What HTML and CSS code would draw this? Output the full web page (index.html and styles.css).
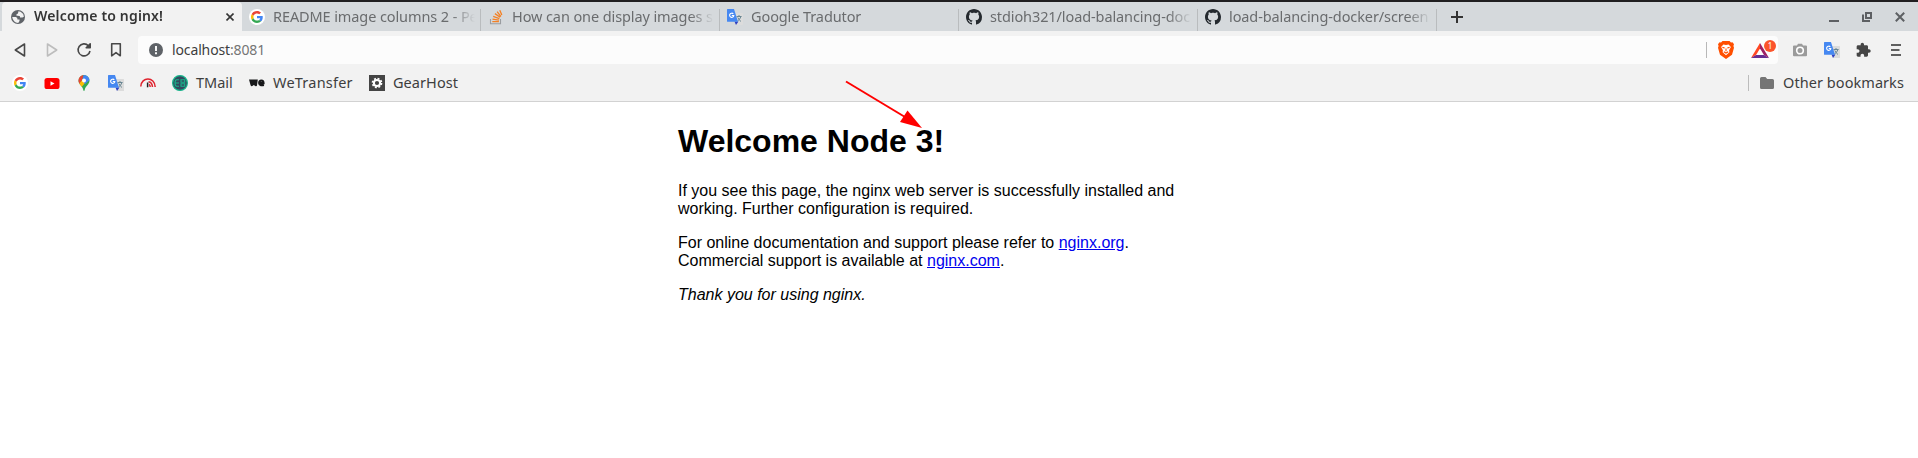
FILE: index.html
```html
<!DOCTYPE html>
<html lang="en">
<head>
<meta charset="utf-8">
<title>Welcome to nginx!</title>
<link rel="stylesheet" href="styles.css">
</head>
<body>
<svg class="defs" aria-hidden="true">
  <symbol id="google" viewBox="0 0 48 48">
    <path fill="#ea4335" d="M24 9.5c3.54 0 6.71 1.22 9.21 3.6l6.85-6.85C35.9 2.38 30.47 0 24 0 14.62 0 6.51 5.38 2.56 13.22l7.98 6.19C12.43 13.72 17.74 9.5 24 9.5z"/>
    <path fill="#4285f4" d="M46.98 24.55c0-1.57-.15-3.09-.38-4.55H24v9.02h12.94c-.58 2.96-2.26 5.48-4.78 7.18l7.73 6c4.51-4.18 7.09-10.36 7.09-17.65z"/>
    <path fill="#fbbc05" d="M10.53 28.59c-.48-1.45-.76-2.99-.76-4.59s.27-3.14.76-4.59l-7.98-6.19C.92 16.46 0 20.12 0 24c0 3.88.92 7.54 2.56 10.78l7.97-6.19z"/>
    <path fill="#34a853" d="M24 48c6.48 0 11.93-2.13 15.89-5.81l-7.73-6c-2.15 1.45-4.92 2.3-8.16 2.3-6.26 0-11.57-4.22-13.47-9.91l-7.98 6.19C6.51 42.62 14.62 48 24 48z"/>
  </symbol>
  <symbol id="translate" viewBox="0 0 16 16">
    <path fill="#dcdcdc" d="M7 4h8.5q.5 0 .5.5v11q0 .5-.5.5H9z"/>
    <path fill="none" stroke="#5f7f8c" stroke-width=".9" d="M9.5 7.5h5M12 6v1.500M14 7.500q-1 3-3.500 4.500M10.800 8.500q1.200 2.500 3.200 4"/>
    <path fill="#3040c0" d="M7.500 12.500h4L9 16z"/>
    <path fill="#4688f1" d="M.5 0H7l4 12.700H.5Q0 12.700 0 12.200V.5Q0 0 .5 0z"/>
    <path fill="none" stroke="#fff" stroke-width="1.100" d="M6.300 4.900A2.100 2.100 0 1 0 6.800 6.500H4.800"/>
  </symbol>
  <symbol id="github" viewBox="0 0 16 16">
    <path fill="#24292e" d="M8 0C3.58 0 0 3.58 0 8c0 3.54 2.290 6.530 5.470 7.590.4.070.550-.170.550-.380 0-.190-.010-.820-.010-1.490-2.010.370-2.530-.490-2.690-.940-.090-.230-.480-.940-.820-1.130-.280-.150-.680-.520-.010-.530.630-.010 1.080.580 1.230.820.720 1.210 1.870.870 2.330.660.070-.520.280-.870.510-1.070-1.780-.2-3.640-.890-3.640-3.950 0-.870.310-1.590.820-2.150-.080-.2-.360-1.020.080-2.120 0 0 .670-.210 2.200.820.640-.180 1.320-.270 2-.270s1.360.090 2 .270c1.530-1.040 2.200-.820 2.200-.820.440 1.100.160 1.920.080 2.120.510.560.820 1.270.820 2.150 0 3.070-1.870 3.750-3.650 3.950.290.250.540.730.540 1.480 0 1.070-.010 1.930-.010 2.200 0 .210.150.460.550.380A8.010 8.010 0 0 0 16 8c0-4.420-3.580-8-8-8z"/>
  </symbol>
</svg>

<header class="chrome">
  <div class="tabstrip">
    <div class="tab active">
      <svg class="icon" viewBox="0 0 16 16"><circle cx="8" cy="8" r="7" fill="#5f6368"/><path fill="#f2f2f2" d="M2.200 8.100h3.500q2 .2 1.800 2.300h2v1.500L8.200 14Q3 13.600 2.200 8.100zM8.400 2.300l2.200.4q3 1.500 3.300 5l-1.500.8H10V7.300L8 6.800H6.500V5.200L8 4.600z"/></svg>
      <span class="title">Welcome to nginx!</span>
      <svg class="close" viewBox="0 0 8 8"><path d="M.5.5l7 7M7.500.5l-7 7"/></svg>
    </div>
    <div class="tab first"><span class="disc"><svg class="g"><use href="#google"/></svg></span><span class="title">README image columns 2 - Pe</span></div>
    <div class="tab">
      <svg class="icon" viewBox="0 0 16 16"><path fill="none" stroke="#9a9da0" stroke-width="1.100" d="M2.500 10v4.800h10V10"/><path fill="none" stroke="#f48024" stroke-width="1.300" d="M4.300 12.600h6.600M4.500 10.200l6.500.9M5.200 7.400l6.200 2.200M6.900 4.600l5.300 3.600M9.100 2.700l3.800 4.800M11.800 1.300l2 4.800"/></svg>
      <span class="title">How can one display images si</span>
    </div>
    <div class="tab"><svg class="icon"><use href="#translate"/></svg><span class="title">Google Tradutor</span></div>
    <div class="tab"><svg class="icon"><use href="#github"/></svg><span class="title">stdioh321/load-balancing-doc</span></div>
    <div class="tab"><svg class="icon"><use href="#github"/></svg><span class="title">load-balancing-docker/screen</span></div>
    <div class="tab new"><svg class="plus" viewBox="0 0 12 12"><path d="M6 0v12M0 6h12"/></svg></div>
    <div class="window">
      <svg viewBox="0 0 10 10"><path d="M0 9h10"/></svg>
      <svg viewBox="0 0 10 10"><path d="M4 1h5v5H4zM1 2.500V9h7"/></svg>
      <svg viewBox="0 0 10 10"><path d="M.8.8l8.400 8.400M9.200.8L.8 9.200"/></svg>
    </div>
  </div>

  <div class="toolbar">
    <nav class="nav">
      <svg viewBox="0 0 16 16"><path d="M12.500 2v12L3.300 8z"/></svg>
      <svg class="dim" viewBox="0 0 16 16"><path d="M3.500 2v12l9.200-6z"/></svg>
      <svg viewBox="0 0 16 16"><path d="M12.400 3.700A6 6 0 1 0 14 9"/><path class="solid" d="M10.200 5.800l4-4v4z"/></svg>
      <svg viewBox="0 0 16 16"><path d="M3.700 1.800h8.600v12L8 10.600l-4.300 3.200z"/></svg>
    </nav>
    <div class="address">
      <svg class="info" viewBox="0 0 14 14"><circle cx="7" cy="7" r="7" fill="#5f6368"/><path d="M7 3v5M7 9.300v1.900" stroke="#fff" stroke-width="1.900"/></svg>
      <span class="url">localhost<i>:8081</i></span>
      <span class="bar"></span>
      <svg class="brave" viewBox="0 0 16 18"><path fill="#ff4f00" d="M4.500 0h7l1.500 1.500 1.500-.2 1.500 2-.6 1.700.6 1.700-2 7L8 18l-6-4.300-2-7L.6 5 0 3.300l1.500-2L3 1.500z"/><path fill="#fff" d="M8 4l2.600-.6L12.900 6l-1.800 3.300.3 1.900L8 14.300l-3.400-3.100.3-1.900L3.100 6l2.300-2.600z"/><path fill="none" stroke="#ff4f00" stroke-width="1.100" d="M4.400 6.400l2.300.6M11.600 6.400L9.300 7M8 7.500v2.800M5.800 10.700L8 12l2.200-1.300"/></svg>
      <div class="bat">
        <svg viewBox="0 0 18 15"><path fill="#ff4724" d="M9 0L0 15l5-3 4-6.500z"/><path fill="#9e1f63" d="M9 0l9 15-5-3-4-6.500z"/><path fill="#662d91" d="M0 15h18l-5-3H5z"/></svg>
        <b>1</b>
      </div>
    </div>
    <div class="extensions">
      <svg viewBox="0 0 16 16"><path fill="#9b9b9b" d="M2 3.500h3L6 1.700h4l1 1.800h3q1 0 1 1v8.700q0 1-1 1H2q-1 0-1-1V4.500q0-1 1-1z"/><circle cx="8" cy="8.500" r="3.300" fill="none" stroke="#fff" stroke-width="1.600"/></svg>
      <svg><use href="#translate"/></svg>
      <svg class="puzzle" viewBox="1 0 24 24"><path fill="#454545" d="M20.500 11H19V7c0-1.100-.9-2-2-2h-4V3.500C13 2.120 11.880 1 10.500 1S8 2.120 8 3.500V5H4c-1.100 0-1.990.9-1.990 2v3.800H3.500c1.490 0 2.700 1.210 2.700 2.700s-1.210 2.700-2.700 2.700H2V20c0 1.100.9 2 2 2h3.800v-1.500c0-1.490 1.210-2.700 2.700-2.700s2.700 1.210 2.700 2.700V22H17c1.100 0 2-.9 2-2v-4h1.500c1.380 0 2.500-1.120 2.500-2.500S21.880 11 20.500 11z"/></svg>
      <svg viewBox="0 0 16 16"><path stroke="#606060" stroke-width="1.800" d="M3 3h10M3 8h8.500M3 13h10"/></svg>
    </div>
  </div>

  <div class="bookmarks">
    <span class="disc"><svg class="g"><use href="#google"/></svg></span>
    <svg class="icon" viewBox="0 0 16 16"><rect x=".5" y="3" width="15" height="11" rx="2.600" fill="#f00"/><path fill="#fff" d="M6.500 6.200v4.600l4-2.300z"/></svg>
    <svg class="icon" viewBox="0 0 16 16"><clipPath id="pin"><path d="M8 0a5.500 5.500 0 0 1 5.500 5.600C13.500 9.600 9.500 11 8.700 15q-.2 1-.7 1t-.7-1C6.500 11 2.500 9.600 2.500 5.600A5.500 5.500 0 0 1 8 0z"/></clipPath><g clip-path="url(#pin)"><path fill="#34a853" d="M0 0h16v16H0z"/><path fill="#fbbc04" d="M1 11L6 5l3 3-5 6z"/><path fill="#4285f4" d="M8-1h8v4L9 9 6 5z"/><path fill="#ea4335" d="M1 3l2-4h4.500L6.300 4.500 3 9 1 7z"/></g><circle cx="8" cy="5.500" r="2" fill="#fff"/></svg>
    <svg class="icon"><use href="#translate"/></svg>
    <svg class="icon" viewBox="0 0 16 16"><path fill="none" stroke="#e0232e" stroke-width="1.500" d="M.8 11.500C1.200 1.500 14.800 1.500 15.200 12M8.500 6.800q3.600.4 4 5.200M9 9.500q1.200.5 1.200 2.500"/><path d="M7.600 12.300V7.500" fill="none" stroke="#222" stroke-width="1.500"/></svg>
    <div class="mark"><svg class="icon" viewBox="0 0 16 16"><circle cx="8" cy="8" r="7.400" fill="#34495e" stroke="#16b78c" stroke-width="1.200"/><path fill="none" stroke="#16b78c" stroke-width="1.100" d="M7 4.700H4.700Q3 4.700 3 8t1.700 3.300H7M3 8h4M9 4.700h3.700v2.600H9zM9 8.700h3.700v2.600H9z"/></svg><span class="w-tmail">TMail</span></div>
    <div class="mark"><svg class="icon" viewBox="0 0 16 16"><path fill="#17181a" d="M0 4.500h8.800L8 10.500q-.4 1.200-1.700.6L4.800 10l-1.500 1.100Q2 11.500 1.500 10z"/><path fill="none" stroke="#17181a" stroke-width="2.200" d="M10.500 8.200h4Q14.500 5.500 12.400 5.500 10.200 5.600 10.200 8q.4 3 4.700 1.900"/></svg><span class="w-transfer">WeTransfer</span></div>
    <div class="mark"><svg class="icon" viewBox="0 0 16 16"><path fill="#444" d="M0 0h16v16H0z"/><circle cx="8" cy="8" r="4.500" fill="none" stroke="#fff" stroke-width="1.700" stroke-dasharray="1.900 1.634"/><circle cx="8" cy="8" r="3.100" fill="none" stroke="#fff" stroke-width="2"/></svg><span class="w-gear">GearHost</span></div>
    <div class="other"><svg class="icon" viewBox="0 0 16 16"><path fill="#757575" d="M2.500 2h4l1.700 2h5.300q1.500 0 1.500 1.500v7q0 1.500-1.500 1.500h-11Q1 14 1 12.500v-9Q1 2 2.500 2z"/></svg><span class="w-other">Other bookmarks</span></div>
  </div>
</header>

<main class="page">
  <h1>Welcome Node 3!</h1>
  <p>If you see this page, the nginx web server is successfully installed and working. Further configuration is required.</p>
  <p>For online documentation and support please refer to <a href="#">nginx.org</a>.<br>Commercial support is available at <a href="#">nginx.com</a>.</p>
  <p><em>Thank you for using nginx.</em></p>
</main>

<svg class="arrow" viewBox="0 0 80 50"><path d="M2 2.500L61 38" stroke="#f00" stroke-width="2"/><path fill="#f00" d="M78 49L63.500 31.500 56 43z"/></svg>
</body>
</html>
```
FILE: styles.css
```css
body {
  margin: 0;
  background: #fff;
  color: #000;
  overflow: hidden;
}

svg {
  display: block;
  flex: none;
}

.defs {
  position: absolute;
  width: 0;
  height: 0;
}

.chrome {
  height: 101px;
  background: #f2f2f2;
  border-bottom: 1px solid #d2d2d2;
  font: 14.5px/20px "Noto Sans", "Open Sans", sans-serif;
  color: #3e3e3e;
  white-space: nowrap;
}

.icon,
.disc {
  width: 16px;
  height: 16px;
  flex: none;
}

.disc {
  display: grid;
  place-items: center;
  background: #fff;
  border-radius: 50%;
}

.g {
  width: 12px;
  height: 12px;
}

/* Tabs */
.tabstrip {
  display: flex;
  height: 29px;
  padding-left: 2px;
  border-top: 2px solid #201e20;
  background: #d5d9dc;
}

.tab {
  display: flex;
  align-items: center;
  gap: 8px;
  box-sizing: border-box;
  width: 239px;
  padding: 0 1px 0 8px;
  background: linear-gradient(#b9bcbe, #b9bcbe) 0 7px / 1px 22px no-repeat;
  color: #6a6c6e;
}

.tab.first {
  background: none;
}

.tab.active {
  width: 240px;
  margin-right: -1px;
  padding-right: 8px;
  background: #f2f2f2;
  border-radius: 4px 4px 0 0;
  color: #353535;
}

.title {
  flex: 1;
  min-width: 0;
  padding-bottom: 2px;
  letter-spacing: -0.1px;
  -webkit-mask-image: linear-gradient(to left, transparent 4px, #000 28px);
  mask-image: linear-gradient(to left, transparent 4px, #000 28px);
}

.active .title {
  font-size: 14px;
  font-weight: 600;
  letter-spacing: 0.16px;
}

.close {
  width: 8px;
  height: 8px;
  fill: none;
  stroke: #353535;
  stroke-width: 1.6;
}

.tab.new {
  width: 44px;
  padding-left: 15px;
}

.plus {
  width: 12px;
  height: 12px;
  stroke: #333;
  stroke-width: 2;
}

.window {
  display: flex;
  align-items: center;
  gap: 23px;
  margin-left: auto;
  padding-right: 13px;
}

.window svg {
  width: 10px;
  height: 10px;
  fill: none;
  stroke: #5d6063;
  stroke-width: 2;
}

/* Navigation and address bar */
.toolbar {
  display: flex;
  align-items: center;
  height: 28px;
  padding: 5px 14px 0 12px;
}

.nav {
  display: flex;
  gap: 16px;
  width: 126px;
}

.nav svg {
  width: 16px;
  height: 16px;
  fill: none;
  stroke: #484848;
  stroke-width: 1.6;
  stroke-linejoin: round;
}

.nav .dim {
  stroke: #bdbdbd;
}

.nav .solid {
  fill: #484848;
}

.address {
  display: flex;
  align-items: center;
  box-sizing: border-box;
  flex: 1;
  height: 28px;
  padding: 0 1px 0 11px;
  background: #fcfcfc;
  border-radius: 4px;
}

.info {
  width: 14px;
  height: 14px;
}

.url {
  margin-left: 9px;
  font-size: 14px;
  letter-spacing: -0.13px;
}

.url i {
  font-style: normal;
  color: #757575;
}

.bar {
  width: 1px;
  height: 16px;
  margin: 0 11px 0 auto;
  background: #b8b8b8;
}

.brave {
  width: 16px;
  height: 18px;
}

.bat {
  position: relative;
  width: 26px;
  height: 15px;
  margin-left: 17px;
}

.bat svg {
  width: 18px;
  height: 15px;
}

.bat b {
  position: absolute;
  top: -3px;
  right: 1px;
  width: 12px;
  height: 12px;
  border-radius: 50%;
  background: #fb542b;
  color: #fff;
  font: 8px/12px "Noto Sans", sans-serif;
  text-align: center;
}

.extensions {
  display: flex;
  gap: 16px;
  margin-left: 14px;
}

.extensions svg {
  width: 16px;
  height: 16px;
}

/* Bookmarks bar */
.bookmarks {
  display: flex;
  align-items: center;
  gap: 16px;
  height: 38px;
  padding: 0 14px 0 12px;
}

.mark,
.other {
  display: flex;
  align-items: center;
  gap: 8px;
}

.mark span,
.other span {
  padding-bottom: 2px;
}

.other {
  margin-left: auto;
  padding-left: 11px;
  background: linear-gradient(#bcbcbc, #bcbcbc) 0 50% / 1px 16px no-repeat;
}

.w-tmail { width: 37px; }
.w-transfer { width: 80px; letter-spacing: 0.22px; }
.w-gear { width: 66px; letter-spacing: 0.06px; }
.w-other { width: 121px; letter-spacing: 0.06px; }

/* Page content */
.page {
  width: 560px;
  margin: 0 0 0 678px;
  font: 16px "Liberation Sans", Arial, sans-serif;
}

.page h1 {
  margin: 21px 0 22px;
  font-size: 32px;
}

.page p {
  width: 525px;
  margin: 16px 0;
  line-height: 18px;
}

.page a {
  color: #00e;
}

/* Annotation drawn over the page */
.arrow {
  position: absolute;
  left: 844px;
  top: 79px;
  width: 80px;
  height: 50px;
}
```
